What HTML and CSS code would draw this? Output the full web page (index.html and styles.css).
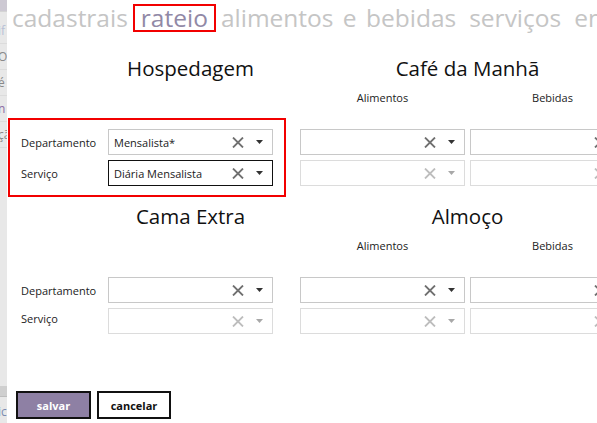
FILE: index.html
```html
<!DOCTYPE html>
<html lang="pt-BR">
<head>
<meta charset="utf-8">
<title>Rateio</title>
<link rel="stylesheet" href="styles.css">
</head>
<body>
<div class="app">
  <aside class="sidebar">
    <div class="sb-top"></div>
    <div class="sb-item sb-blue">if</div>
    <div class="sb-item">O</div>
    <div class="sb-item">é</div>
    <div class="sb-item sb-purple">n</div>
    <div class="sb-item">çã</div>
    <div class="sb-band"></div>
    <div class="sb-item sb-foot">ic</div>
  </aside>
  <main class="main">
    <nav class="tabs">
      <span class="tab">cadastrais</span>
      <span class="tab tab-active">rateio</span>
      <span class="tab">alimentos e bebidas</span>
      <span class="tab">serviços</span>
      <span class="tab">empresas</span>
    </nav>

    <section class="block block-first">
      <div class="group group-left">
        <h2 class="heading">Hospedagem</h2>
        <div class="subheads"></div>
        <div class="fields highlight">
          <div class="row">
            <label class="label">Departamento</label>
            <div class="select">
              <span class="value">Mensalista*</span>
              <svg class="clear" width="12" height="11" viewBox="0 0 12 11"><path d="M1 0.5 L11 10.5 M11 0.5 L1 10.5"/></svg>
              <svg class="caret" width="7" height="4" viewBox="0 0 7 4"><path d="M0 0 H7 L3.5 4 Z"/></svg>
            </div>
          </div>
          <div class="row">
            <label class="label">Serviço</label>
            <div class="select select-focus">
              <span class="value">Diária Mensalista</span>
              <svg class="clear" width="12" height="11" viewBox="0 0 12 11"><path d="M1 0.5 L11 10.5 M11 0.5 L1 10.5"/></svg>
              <svg class="caret" width="7" height="4" viewBox="0 0 7 4"><path d="M0 0 H7 L3.5 4 Z"/></svg>
            </div>
          </div>
        </div>
      </div>
      <div class="group group-right">
        <h2 class="heading">Café da Manhã</h2>
        <div class="subheads"><span class="subhead">Alimentos</span><span class="subhead">Bebidas</span></div>
        <div class="fields">
          <div class="row">
            <div class="select">
              <span class="value"></span>
              <svg class="clear" width="12" height="11" viewBox="0 0 12 11"><path d="M1 0.5 L11 10.5 M11 0.5 L1 10.5"/></svg>
              <svg class="caret" width="7" height="4" viewBox="0 0 7 4"><path d="M0 0 H7 L3.5 4 Z"/></svg>
            </div>
            <div class="select">
              <span class="value"></span>
              <svg class="clear" width="12" height="11" viewBox="0 0 12 11"><path d="M1 0.5 L11 10.5 M11 0.5 L1 10.5"/></svg>
              <svg class="caret" width="7" height="4" viewBox="0 0 7 4"><path d="M0 0 H7 L3.5 4 Z"/></svg>
            </div>
          </div>
          <div class="row">
            <div class="select select-disabled">
              <span class="value"></span>
              <svg class="clear" width="12" height="11" viewBox="0 0 12 11"><path d="M1 0.5 L11 10.5 M11 0.5 L1 10.5"/></svg>
              <svg class="caret" width="7" height="4" viewBox="0 0 7 4"><path d="M0 0 H7 L3.5 4 Z"/></svg>
            </div>
            <div class="select select-disabled">
              <span class="value"></span>
              <svg class="clear" width="12" height="11" viewBox="0 0 12 11"><path d="M1 0.5 L11 10.5 M11 0.5 L1 10.5"/></svg>
              <svg class="caret" width="7" height="4" viewBox="0 0 7 4"><path d="M0 0 H7 L3.5 4 Z"/></svg>
            </div>
          </div>
        </div>
      </div>
    </section>

    <section class="block block-second">
      <div class="group group-left">
        <h2 class="heading">Cama Extra</h2>
        <div class="subheads"></div>
        <div class="fields">
          <div class="row">
            <label class="label">Departamento</label>
            <div class="select">
              <span class="value"></span>
              <svg class="clear" width="12" height="11" viewBox="0 0 12 11"><path d="M1 0.5 L11 10.5 M11 0.5 L1 10.5"/></svg>
              <svg class="caret" width="7" height="4" viewBox="0 0 7 4"><path d="M0 0 H7 L3.5 4 Z"/></svg>
            </div>
          </div>
          <div class="row">
            <label class="label label-up">Serviço</label>
            <div class="select select-disabled">
              <span class="value"></span>
              <svg class="clear" width="12" height="11" viewBox="0 0 12 11"><path d="M1 0.5 L11 10.5 M11 0.5 L1 10.5"/></svg>
              <svg class="caret" width="7" height="4" viewBox="0 0 7 4"><path d="M0 0 H7 L3.5 4 Z"/></svg>
            </div>
          </div>
        </div>
      </div>
      <div class="group group-right">
        <h2 class="heading">Almoço</h2>
        <div class="subheads"><span class="subhead">Alimentos</span><span class="subhead">Bebidas</span></div>
        <div class="fields">
          <div class="row">
            <div class="select">
              <span class="value"></span>
              <svg class="clear" width="12" height="11" viewBox="0 0 12 11"><path d="M1 0.5 L11 10.5 M11 0.5 L1 10.5"/></svg>
              <svg class="caret" width="7" height="4" viewBox="0 0 7 4"><path d="M0 0 H7 L3.5 4 Z"/></svg>
            </div>
            <div class="select">
              <span class="value"></span>
              <svg class="clear" width="12" height="11" viewBox="0 0 12 11"><path d="M1 0.5 L11 10.5 M11 0.5 L1 10.5"/></svg>
              <svg class="caret" width="7" height="4" viewBox="0 0 7 4"><path d="M0 0 H7 L3.5 4 Z"/></svg>
            </div>
          </div>
          <div class="row">
            <div class="select select-disabled">
              <span class="value"></span>
              <svg class="clear" width="12" height="11" viewBox="0 0 12 11"><path d="M1 0.5 L11 10.5 M11 0.5 L1 10.5"/></svg>
              <svg class="caret" width="7" height="4" viewBox="0 0 7 4"><path d="M0 0 H7 L3.5 4 Z"/></svg>
            </div>
            <div class="select select-disabled">
              <span class="value"></span>
              <svg class="clear" width="12" height="11" viewBox="0 0 12 11"><path d="M1 0.5 L11 10.5 M11 0.5 L1 10.5"/></svg>
              <svg class="caret" width="7" height="4" viewBox="0 0 7 4"><path d="M0 0 H7 L3.5 4 Z"/></svg>
            </div>
          </div>
        </div>
      </div>
    </section>

    <div class="actions">
      <button class="btn btn-primary" type="button">salvar</button>
      <button class="btn btn-secondary" type="button">cancelar</button>
    </div>
  </main>
</div>
</body>
</html>
```

FILE: styles.css
```css
* { box-sizing: border-box; }

html, body {
  margin: 0;
  padding: 0;
  background: #ffffff;
}

body {
  width: 597px;
  height: 423px;
  overflow: hidden;
  font-family: "Open Sans", "Noto Sans", "DejaVu Sans", sans-serif;
  color: #1a1a1a;
}

.app {
  display: flex;
  height: 423px;
}

/* left sidebar strip */
.sidebar {
  width: 7px;
  flex: none;
  background: #e8e8e8;
  display: flex;
  flex-direction: column;
  overflow: hidden;
  font-size: 12px;
  color: #8a8a8a;
}
.sb-top {
  height: 12px;
  background: #cdc9d3;
  border-bottom: 1px solid #d4d4d4;
  margin-bottom: 6px;
}
.sb-item {
  height: 26px;
  line-height: 26px;
  white-space: nowrap;
  text-indent: -2px;
  border-bottom: 1px solid #dcdcdc;
}
.sb-blue { color: #b7c0d6; }
.sb-purple { color: #8c6aa3; }
.sb-band {
  margin-top: auto;
  height: 11px;
  background: #cfcfcf;
  border-bottom: 1px solid #bdbdbd;
  margin-bottom: 2px;
}
.sb-foot {
  height: 24px;
  color: #7b8cb0;
  border-bottom: none;
}

.main {
  flex: 1;
  min-width: 0;
  padding-left: 5px;
}

/* tabs */
.tabs {
  display: flex;
  align-items: baseline;
  gap: 13px;
  height: 36px;
  padding-top: 4px;
  font-size: 24.5px;
  word-spacing: 3px;
  line-height: 28px;
  color: #c5c5c5;
  white-space: nowrap;
}
.tab { flex: none; }
.tab-active {
  color: #9189a6;
  line-height: 24px;
  border: 2px solid #f20000;
  padding: 0 6px;
  margin: 0 -8px;
}

/* form blocks */
.block {
  display: flex;
  margin-left: 9px;
}
.block-first { margin-top: 18px; }
.block-second { margin-top: 16px; }

.group { flex: none; }
.group-left { width: 252px; }
.group-right { width: 335px; margin-left: 27px; }

.heading {
  margin: 0;
  height: 28px;
  font-size: 20.5px;
  font-weight: 400;
  line-height: 28px;
  text-align: center;
  color: #111111;
  white-space: nowrap;
}
.group-left .heading {
  margin-left: 87px;
  width: 165px;
}

.subheads {
  display: flex;
  gap: 5px;
  height: 47px;
  padding-top: 8px;
  font-size: 11px;
  line-height: 16px;
  color: #222222;
}
.subhead {
  width: 165px;
  text-align: center;
}

.fields {
  display: flex;
  flex-direction: column;
  gap: 5px;
}
.row {
  display: flex;
  align-items: center;
  gap: 5px;
  height: 26px;
}
.group-left .row { gap: 0; }

.label {
  width: 87px;
  flex: none;
  font-size: 11px;
  color: #222222;
  white-space: nowrap;
}
.label-up { margin-top: -5px; }

/* select */
.select {
  width: 165px;
  height: 26px;
  flex: none;
  display: flex;
  align-items: center;
  border: 1px solid #c8c8c8;
  background: #ffffff;
  padding-left: 5px;
  font-size: 11px;
  color: #1a1a1a;
}
.select-focus { border-color: #111111; }
.select-disabled { border-color: #dcdcdc; }

.value {
  flex: 1;
  white-space: nowrap;
  overflow: hidden;
}
.clear {
  flex: none;
  margin-right: 12px;
}
.clear path {
  stroke: #707070;
  stroke-width: 1.8;
  fill: none;
}
.caret {
  flex: none;
  margin-right: 9px;
}
.caret path { fill: #333333; }

.select-disabled .clear path { stroke: #bdbdbd; }
.select-disabled .caret path { fill: #a8a8a8; }

/* highlight annotation */
.highlight { position: relative; }
.highlight::after {
  content: "";
  position: absolute;
  top: -11px;
  bottom: -11px;
  left: -13px;
  right: -13px;
  border: 2px solid #f20000;
  pointer-events: none;
}

/* buttons */
.actions {
  display: flex;
  gap: 6px;
  margin-top: 57px;
  padding-left: 4px;
}
.btn {
  width: 75px;
  height: 28px;
  border: 2.5px solid #111111;
  font-family: "Open Sans", "Noto Sans", sans-serif;
  font-size: 11px;
  font-weight: 700;
  padding: 0;
  cursor: pointer;
}
.btn-primary {
  background: #8e80a4;
  color: #ffffff;
}
.btn-secondary {
  width: 74px;
  background: #ffffff;
  color: #111111;
}
```
